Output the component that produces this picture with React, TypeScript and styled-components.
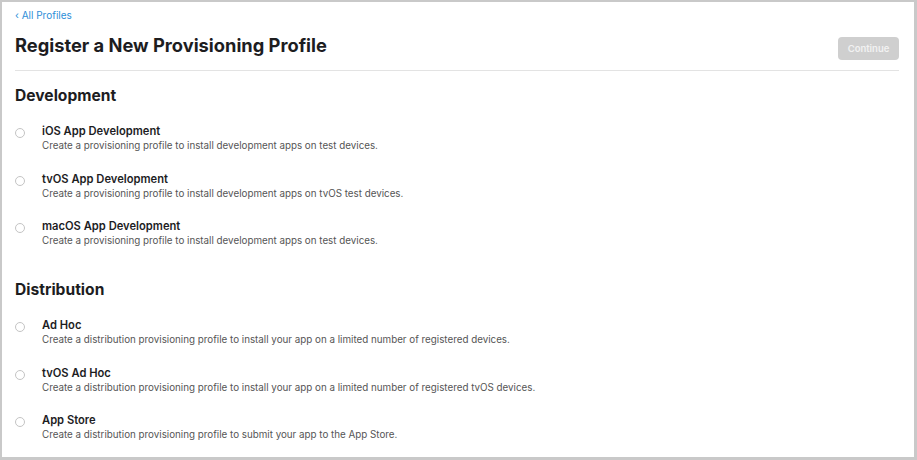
import React from "react";
import styled, { createGlobalStyle } from "styled-components";

const GlobalStyle = createGlobalStyle`
  html, body {
    margin: 0;
    padding: 0;
    background: #c9c9c9;
  }
  body {
    font-family: Inter, "Noto Sans", "Liberation Sans", sans-serif;
    -webkit-font-smoothing: antialiased;
  }
`;

type Option = { title: string; desc: string };

const development: Option[] = [
  {
    title: "iOS App Development",
    desc: "Create a provisioning profile to install development apps on test devices.",
  },
  {
    title: "tvOS App Development",
    desc: "Create a provisioning profile to install development apps on tvOS test devices.",
  },
  {
    title: "macOS App Development",
    desc: "Create a provisioning profile to install development apps on test devices.",
  },
];

const distribution: Option[] = [
  {
    title: "Ad Hoc",
    desc: "Create a distribution provisioning profile to install your app on a limited number of registered devices.",
  },
  {
    title: "tvOS Ad Hoc",
    desc: "Create a distribution provisioning profile to install your app on a limited number of registered tvOS devices.",
  },
  {
    title: "App Store",
    desc: "Create a distribution provisioning profile to submit your app to the App Store.",
  },
];

function Section({ name, options }: { name: string; options: Option[] }) {
  return (
    <SectionBox>
      <SectionTitle>{name}</SectionTitle>
      <OptionList>
        {options.map((o) => (
          <OptionRow key={o.title}>
            <Radio />
            <OptionText>
              <OptionTitle>{o.title}</OptionTitle>
              <OptionDesc>{o.desc}</OptionDesc>
            </OptionText>
          </OptionRow>
        ))}
      </OptionList>
    </SectionBox>
  );
}

function App() {
  return (
    <>
      <GlobalStyle />
      <Frame>
        <Panel>
          <BackLink href="#">‹ All Profiles</BackLink>
          <Header>
            <Title>Register a New Provisioning Profile</Title>
            <ContinueBtn disabled>Continue</ContinueBtn>
          </Header>
          <Divider />
          <Section name="Development" options={development} />
          <Section name="Distribution" options={distribution} />
        </Panel>
      </Frame>
    </>
  );
}

const Frame = styled.div`
  width: 917px;
  height: 460px;
  padding: 2px 3px 3px 2px;
  box-sizing: border-box;
`;

const Panel = styled.div`
  height: 100%;
  background: #fff;
  padding: 0 15px 0 13px;
  box-sizing: border-box;
  display: flex;
  flex-direction: column;
`;

const BackLink = styled.a`
  margin-top: 8px;
  font-size: 10px;
  line-height: 11px;
  color: #2d8ed8;
  text-decoration: none;
`;

const Header = styled.div`
  display: flex;
  justify-content: space-between;
  align-items: flex-start;
  margin-top: 14px;
`;

const Title = styled.h1`
  margin: 0;
  font-size: 18.3px;
  line-height: 20px;
  font-weight: 700;
  color: #1d1d1f;
`;

const ContinueBtn = styled.button`
  margin-top: 2px;
  width: 61px;
  height: 23px;
  border: none;
  border-radius: 4px;
  background: #cfcfcf;
  color: #f2f2f2;
  font-family: inherit;
  font-size: 9.5px;
  font-weight: 600;
  padding: 0;
`;

const Divider = styled.hr`
  margin: 10px 0 0;
  border: none;
  border-top: 1px solid #e3e3e3;
`;

const SectionBox = styled.section`
  display: flex;
  flex-direction: column;
  margin-top: 16px;
  & + & {
    margin-top: 35px;
  }
`;

const SectionTitle = styled.h2`
  margin: 0;
  font-size: 15.6px;
  line-height: 18px;
  font-weight: 700;
  color: #1d1d1f;
`;

const OptionList = styled.div`
  display: flex;
  flex-direction: column;
  gap: 21.5px;
  margin-top: 20px;
`;

const OptionRow = styled.label`
  display: flex;
  align-items: flex-start;
`;

const Radio = styled.span`
  width: 8px;
  height: 8px;
  border: 1px solid #c4c4c4;
  border-radius: 50%;
  margin: 3px 17px 0 0;
  flex-shrink: 0;
`;

const OptionText = styled.div`
  display: flex;
  flex-direction: column;
`;

const OptionTitle = styled.span`
  font-size: 11.2px;
  line-height: 13px;
  font-weight: 600;
  color: #1d1d1f;
`;

const OptionDesc = styled.span`
  margin-top: 2px;
  font-size: 9.8px;
  line-height: 11px;
  color: #555;
`;

export default App;
